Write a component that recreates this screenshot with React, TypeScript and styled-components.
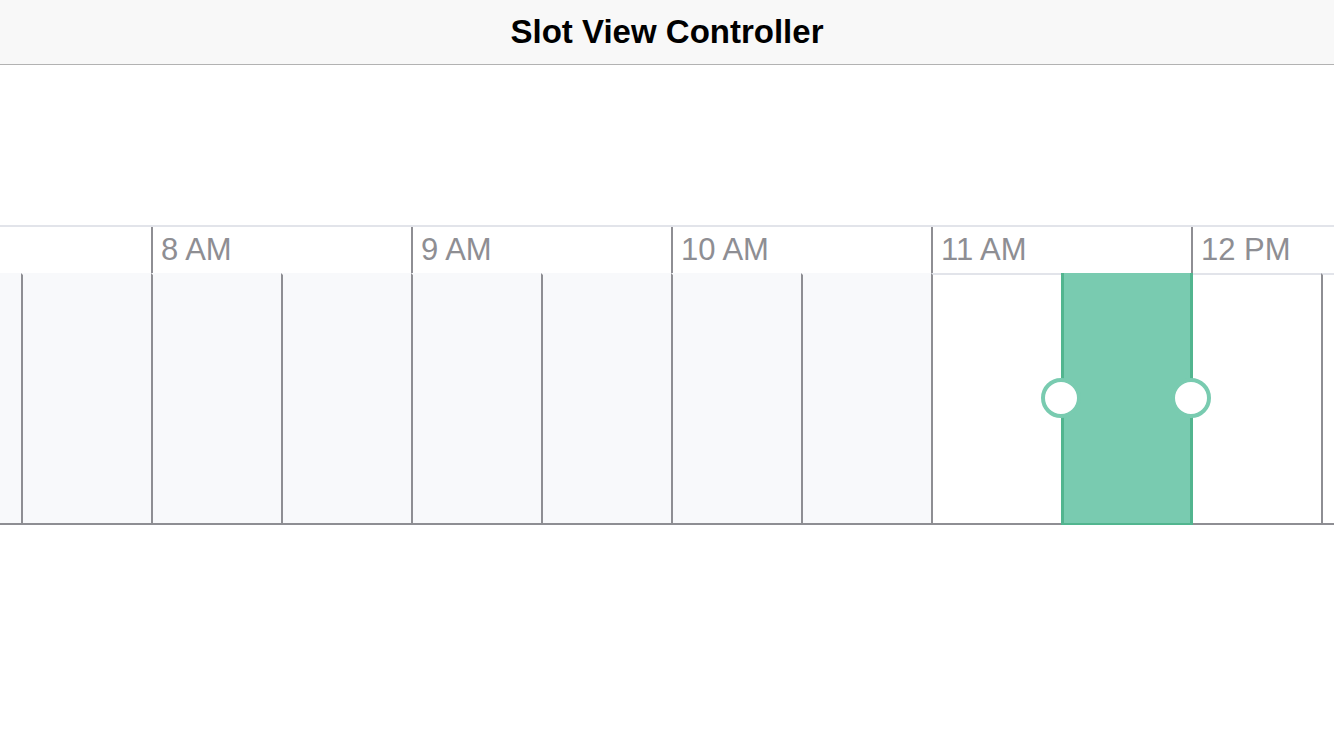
import styled, { createGlobalStyle } from 'styled-components'

const GlobalStyle = createGlobalStyle`
  html, body {
    margin: 0;
    padding: 0;
    background: #ffffff;
    font-family: "Liberation Sans", Arial, sans-serif;
  }
`

interface SlotProps {
  past: boolean
}

// the first column is scrolled mostly out of view, so its label is not shown
const HOURS = ['', '8 AM', '9 AM', '10 AM', '11 AM', '12 PM']
const PAST_SLOTS = 8
const SELECTED_SLOT = 9

const Page = styled.div`
  width: 1334px;
  height: 750px;
  overflow: hidden;
  background: #ffffff;
`

const NavBar = styled.header`
  height: 64px;
  background: #f8f8f8;
  border-bottom: 1px solid #b2b2b2;
  display: flex;
  align-items: center;
  justify-content: center;
`

const Title = styled.h1`
  margin: 0;
  font-size: 33px;
  line-height: 64px;
  font-weight: 700;
  color: #000000;
`

const Timeline = styled.section`
  margin-top: 160px;
  border-top: 2px solid #e2e4ea;
  overflow: hidden;
`

const Track = styled.div`
  display: flex;
  width: max-content;
  margin-left: -109px;
`

const HourColumn = styled.div`
  width: 260px;
  flex-shrink: 0;
  display: flex;
  flex-direction: column;
`

const HourLabel = styled.div`
  height: 46px;
  border-left: 2px solid #8e8e93;
  padding-left: 8px;
  font-size: 31px;
  line-height: 46px;
  color: #8e8e93;
  background: #ffffff;
`

const SlotRow = styled.div`
  display: flex;
`

const Slot = styled.div<SlotProps>`
  position: relative;
  width: 128px;
  height: 248px;
  border-left: 2px solid #8e8e93;
  border-top: 2px solid ${p => (p.past ? '#f8f9fb' : '#e2e4ea')};
  border-bottom: 2px solid #8e8e93;
  background: ${p => (p.past ? '#f8f9fb' : '#ffffff')};
  flex-shrink: 0;
  & + & {
    width: 128px;
  }
`

const Selection = styled.div`
  position: absolute;
  top: -2px;
  bottom: -2px;
  left: -2px;
  width: 132px;
  box-sizing: border-box;
  background: #79cbb0;
  border-left: 3px solid #52b58f;
  border-right: 3px solid #52b58f;
  border-bottom: 2px solid #52b58f;
  z-index: 2;
`

const Handle = styled.div<{ side: 'left' | 'right' }>`
  position: absolute;
  top: 50%;
  ${p => (p.side === 'left' ? 'left: -23px;' : 'right: -21px;')}
  width: 40px;
  height: 40px;
  margin-top: -20px;
  box-sizing: border-box;
  border-radius: 50%;
  background: #ffffff;
  border: 4px solid #79cbb0;
`

export default function App() {
  return (
    <Page>
      <GlobalStyle />
      <NavBar>
        <Title>Slot View Controller</Title>
      </NavBar>
      <Timeline>
        <Track>
          {HOURS.map((hour, h) => (
            <HourColumn key={h}>
              <HourLabel>{hour}</HourLabel>
              <SlotRow>
                {[0, 1].map(half => {
                  const index = h * 2 + half
                  return (
                    <Slot key={half} past={index < PAST_SLOTS}>
                      {index === SELECTED_SLOT && (
                        <Selection>
                          <Handle side="left" />
                          <Handle side="right" />
                        </Selection>
                      )}
                    </Slot>
                  )
                })}
              </SlotRow>
            </HourColumn>
          ))}
        </Track>
      </Timeline>
    </Page>
  )
}
